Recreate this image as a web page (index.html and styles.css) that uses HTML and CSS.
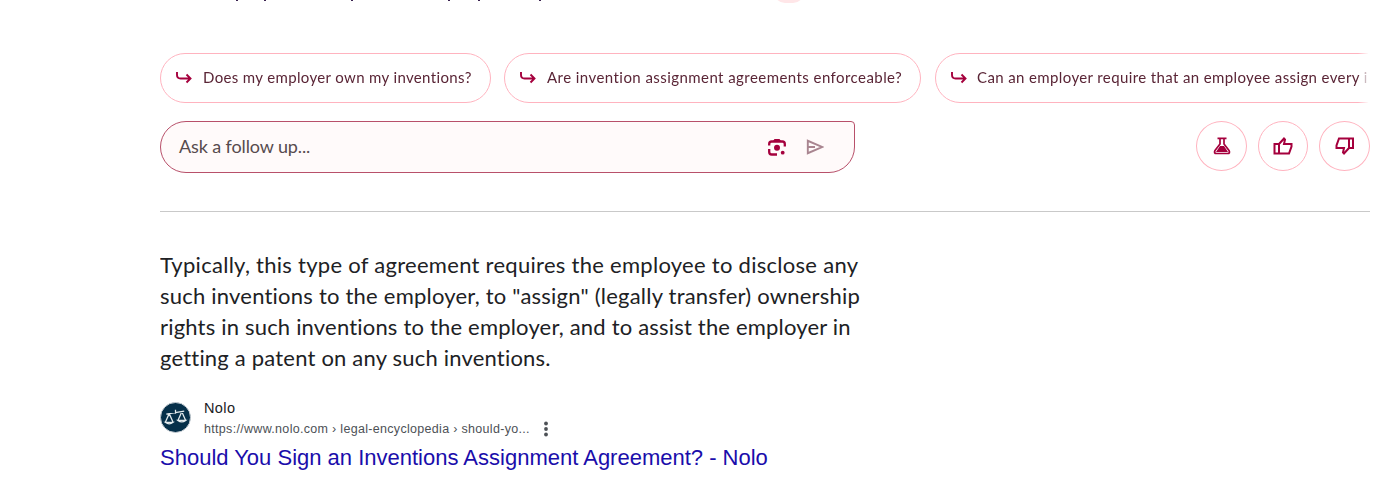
FILE: index.html
```html
<!DOCTYPE html>
<html lang="en">
<head>
<meta charset="utf-8">
<title>Inventions assignment agreement</title>
<link rel="stylesheet" href="styles.css">
</head>
<body>
<main class="page">
  <div class="answer-tail">
    <svg class="descenders" viewBox="0 0 400 1"><path d="M76 0h2v1h-2zM104 0h2v1h-2zM191 0h2v1h-2zM288 0h2v1h-2zM318 0h2v1h-2zM379 0h2v1h-2z"/></svg>
    <span class="source-pill"></span>
  </div>
  <div class="suggestions">
    <div class="chip chip-1"><svg class="arrow" viewBox="0 0 16 12"><path d="M1 0v3Q1 6.500 4.500 6.500H14M10.500 2.500l4 4-4 4"/></svg><span>Does my employer own my inventions?</span></div>
    <div class="chip chip-2"><svg class="arrow" viewBox="0 0 16 12"><path d="M1 0v3Q1 6.500 4.500 6.500H14M10.500 2.500l4 4-4 4"/></svg><span>Are invention assignment agreements enforceable?</span></div>
    <div class="chip chip-3"><svg class="arrow" viewBox="0 0 16 12"><path d="M1 0v3Q1 6.500 4.500 6.500H14M10.500 2.500l4 4-4 4"/></svg><span>Can an employer require that an employee assign every i</span></div>
  </div>
  <div class="actions">
    <div class="ask"><span class="ask-label">Ask a follow up...</span>
      <svg class="lens" viewBox="0 0 18 18"><path class="line" d="M1.200 7.500V6q0-2.500 2.500-2.500h10.600q2.500 0 2.500 2.500v2.500M1.200 11v3q0 2.500 2.500 2.500H9"/><path d="M5 3l1.500-2h5L13 3z"/><circle cx="9" cy="9.800" r="3"/><circle cx="14.700" cy="14.700" r="1.900"/></svg>
      <svg class="send" viewBox="0 0 18 16"><path d="M1.800 1.800v12.400L16 8zM2 8h7"/></svg>
    </div>
    <div class="feedback">
      <div class="round"><svg viewBox="0 0 20 18"><path class="line thin" d="M5.500 1.300h9M8 1v6l-5 6.500q-1.500 3 1.500 3h11q3 0 1.500-3L12 7V1"/><path d="M8 9h4l4 6H4z"/></svg></div>
      <div class="round mid"><svg viewBox="0 0 20 18"><path class="line" d="M1.500 7H6v9.500H1.500zM6 7l5-5.500 1 1-1 4.500h7.500v2.500L16 16.500H6"/></svg></div>
      <div class="round"><svg viewBox="0 0 20 18"><path class="line" d="M18 1.500h-4v9.500h4zM14 11l-5 5.500-1-1 1-4.500H1.500V8.500L4 1.500H14"/></svg></div>
    </div>
  </div>
  <p class="snippet"><span class="l1">Typically, this type of agreement requires the employee to disclose any</span><span class="l2">such inventions to the employer, to "assign" (legally transfer) ownership</span><span class="l3">rights in such inventions to the employer, and to assist the employer in</span><span class="l4">getting a patent on any such inventions.</span></p>
  <div class="source">
    <svg class="logo" viewBox="0 0 32 32"><circle cx="16" cy="16" r="15.500"/><path d="M6.500 12.500L25 9.500M16 8v4M9.500 12l-4 9M9.500 12l4 9M22.500 10l-4 9M22.500 10l4 9M5.500 21q4 3 8 0zM18.500 19q4 3 8 0z"/></svg>
    <div class="source-text"><span class="site">Nolo</span><div class="url-row"><span class="url">https://www.nolo.com<span class="crumb"> › legal-encyclopedia › should-yo...</span></span><svg class="more" viewBox="0 0 6 16"><circle cx="3" cy="2.500" r="1.900"/><circle cx="3" cy="8" r="1.900"/><circle cx="3" cy="13.500" r="1.900"/></svg></div></div>
  </div>
  <a class="title">Should You Sign an Inventions Assignment Agreement? - Nolo</a>
</main>
</body>
</html>
```
FILE: styles.css
```css
* { box-sizing: border-box; }
body { margin: 0; background: #fff; overflow: hidden; color: #202124; font-family: "Liberation Sans", Arial, sans-serif; }
.page { width: 1210px; margin-left: 160px; height: 480px; overflow: hidden; }
.answer-tail { display: flex; align-items: flex-start; height: 53px; overflow: hidden; }
.descenders { width: 400px; height: 1px; fill: #3b2450; margin-right: 214px; }
.source-pill { width: 30px; height: 22px; margin-top: -19px; border-radius: 11px; background: #ffe6e8; }
.suggestions { display: flex; gap: 13px; height: 50px; overflow: hidden; width: 1208px; -webkit-mask-image: linear-gradient(90deg, #000 1198px, transparent 1209px); mask-image: linear-gradient(90deg, #000 1198px, transparent 1209px); }
.chip { flex: none; height: 50px; border: 1px solid #ffb3bf; border-radius: 25px; display: flex; align-items: center; padding: 0 0 1px 15px; gap: 11px; font: 15px Lato, sans-serif; color: #5a2536; white-space: nowrap; }
.chip span { padding-bottom: 2px; }
.chip-1 { width: 331px; letter-spacing: .35px; }
.chip-2 { width: 417px; letter-spacing: .44px; }
.chip-3 { width: 520px; margin-left: 1px; letter-spacing: .38px; }
.chip-3 span { margin-left: -1px; }
.arrow { width: 16px; height: 12px; fill: none; stroke: #a5003d; stroke-width: 1.9; overflow: visible; }
.actions { display: flex; justify-content: space-between; margin-top: 18px; height: 52px; }
.ask { width: 695px; height: 52px; border: 1px solid #b8506a; border-radius: 26px 4px 26px 26px; background: #fffafa; display: flex; align-items: center; padding: 0 30px 0 18px; }
.ask-label { flex: 1; font: 18px Lato, sans-serif; letter-spacing: -.12px; color: #574b4e; padding-bottom: 2px; }
.lens { width: 18px; height: 18px; fill: #a5003d; margin-right: 20px; }
.line { fill: none; stroke: #a5003d; stroke-width: 2; }
.lens .line { stroke-width: 2.3; }
.round .thin { stroke-width: 1.7; }
.send { width: 18px; height: 16px; fill: none; stroke: #a98590; stroke-width: 1.9; }
.feedback { display: flex; gap: 11px; }
.round { width: 51px; height: 50px; border: 1px solid #ffb3bf; border-radius: 50%; display: flex; align-items: center; justify-content: center; }
.mid { width: 50px; }
.round svg { width: 20px; height: 18px; fill: #a5003d; }
.snippet { margin: 38px 0 0; border-top: 1px solid #c9c9c9; padding-top: 37px; font: 22px/31px Lato, sans-serif; color: #202124; }
.snippet span { display: block; width: max-content; }
.l1 { letter-spacing: .28px; }
.l2 { letter-spacing: .22px; }
.l3 { letter-spacing: .19px; }
.l4 { letter-spacing: .2px; }
.source { display: flex; margin-top: 25px; height: 40px; align-items: flex-start; }
.logo { width: 31px; height: 31px; margin: 4px 13px 0 0; fill: none; stroke: #e4ebee; stroke-width: 1.3; }
.logo circle { fill: #06304a; stroke: #c9d0d5; stroke-width: 1; }
.source-text { display: flex; flex-direction: column; }
.site { font-size: 14.500px; line-height: 20px; letter-spacing: .4px; }
.url-row { display: flex; align-items: center; gap: 13px; height: 22px; }
.url { font-size: 12.500px; line-height: 20px; color: #4d5156; letter-spacing: .31px; }
.more { width: 6px; height: 16px; fill: #4d5156; }
.title { display: block; margin-top: 6px; font-size: 22px; line-height: 28px; color: #1a0dab; white-space: nowrap; }
```
